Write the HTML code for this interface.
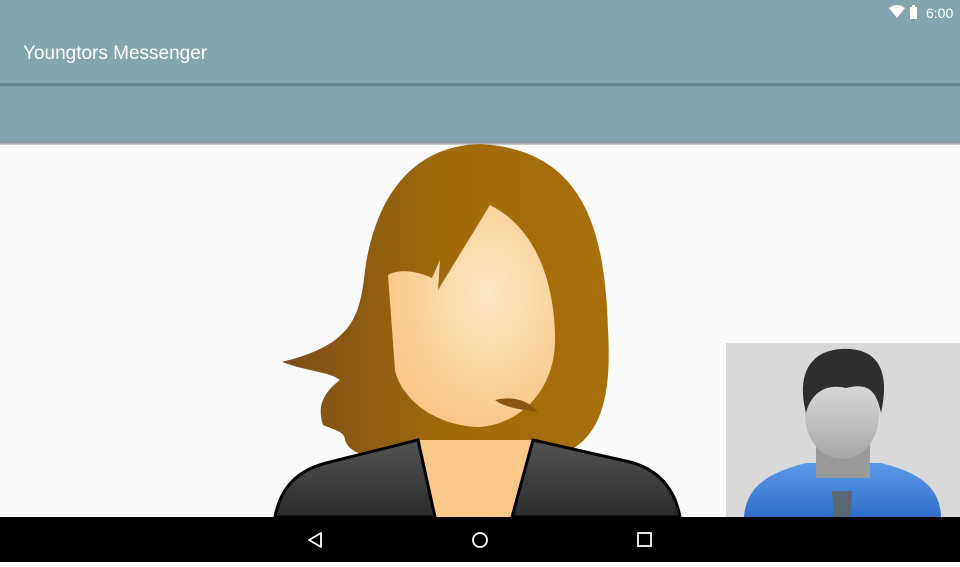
<!DOCTYPE html>
<html><head><meta charset="utf-8"><style>
html,body{margin:0;padding:0;width:960px;height:562px;overflow:hidden;background:#fafafa;font-family:"Liberation Sans",sans-serif}
.bar{position:absolute;left:0;top:0;width:960px;height:144px;background:#83a5ae}
.line{position:absolute;left:0;top:83px;width:960px;height:4px;background:linear-gradient(#6f8f98,#5f7f88,#7d9ea7)}
.bot{position:absolute;left:0;top:141px;width:960px;height:4px;background:linear-gradient(#7e9aa4,#8e9ea6,#d8d8d8)}
.title{position:absolute;left:23px;top:43px;color:#fff;font-size:19px}
.time{position:absolute;left:926px;top:5px;color:#fff;font-size:14px}
.nav{position:absolute;left:0;top:517px;width:960px;height:45px;background:#000}
.thumb{position:absolute;left:726px;top:343px;width:234px;height:174px;background:#d9d9d9;overflow:hidden}
</style></head><body>
<div class="bar"></div><div class="line"></div><div class="bot"></div>
<div class="title">Youngtors Messenger</div>
<svg style="position:absolute;left:888px;top:4px" width="36" height="16">
<path d="M1 4 Q9 -2 17 4 L9 14 Z" fill="#fff"/><rect x="22" y="3" width="7" height="12" fill="#fff"/><rect x="24" y="1" width="3" height="2" fill="#fff"/></svg>
<div class="time">6:00</div>
<svg style="position:absolute;left:0;top:0" width="960" height="517">
<defs>
<radialGradient id="sk" cx="0.6" cy="0.4" r="0.6"><stop offset="0" stop-color="#fde6c4"/><stop offset="1" stop-color="#f9c98a"/></radialGradient>
<linearGradient id="hr" x1="0" x2="1"><stop offset="0" stop-color="#7a4e16"/><stop offset="0.5" stop-color="#a06a0c"/><stop offset="1" stop-color="#a8700a"/></linearGradient>
<linearGradient id="jk" x1="0" y1="0" x2="0" y2="1"><stop offset="0" stop-color="#555"/><stop offset="1" stop-color="#2a2a2a"/></linearGradient>
</defs>
<path d="M480 144 C410 146 375 200 365 270 C360 320 350 345 282 362 C310 372 330 372 340 380 C320 395 318 410 323 425 C335 430 345 432 345 440 C350 455 370 460 420 455 L560 455 C600 440 612 400 608 330 C605 240 590 150 480 144 Z" fill="url(#hr)"/>
<path d="M420 440 L420 517 L540 517 L535 440 Z" fill="#f9c98a"/>
<path d="M490 205 C540 230 555 290 555 340 C555 390 520 425 478 427 C430 425 400 395 395 370 L388 275 C400 268 420 272 432 278 L440 260 L438 290 Z" fill="url(#sk)"/>
<path d="M495 400 C515 395 530 402 538 412 C525 410 505 408 495 400 Z" fill="#8a5510"/>
<path d="M275 517 C280 490 295 470 330 462 L418 440 L435 517 Z" fill="url(#jk)" stroke="#000" stroke-width="3"/>
<path d="M680 517 C675 490 660 470 630 462 L533 440 L512 517 Z" fill="url(#jk)" stroke="#000" stroke-width="3"/>
</svg>
<div class="thumb"><svg width="234" height="174">
<defs><linearGradient id="fc" x1="0" y1="0" x2="0" y2="1"><stop offset="0" stop-color="#e2e2e2"/><stop offset="1" stop-color="#a6a6a6"/></linearGradient>
<linearGradient id="sh" x1="0" y1="0" x2="0" y2="1"><stop offset="0" stop-color="#5b9ae8"/><stop offset="1" stop-color="#2f6fc8"/></linearGradient></defs>
<path d="M18 174 C20 145 40 130 80 120 L155 120 C195 130 214 145 215 174 Z" fill="url(#sh)"/>
<rect x="90" y="95" width="54" height="40" fill="#9a9a9a"/>
<ellipse cx="116" cy="72" rx="37" ry="44" fill="url(#fc)"/>
<path d="M80 70 C70 30 85 8 115 6 C150 4 165 25 155 70 C150 45 140 40 120 45 C100 40 85 50 80 70 Z" fill="#2e2e2e"/>
<path d="M106 148 L126 148 L124 174 L108 174 Z" fill="#5a6670"/>
</svg></div>
<div class="nav"><svg width="960" height="45">
<path d="M309 23 L321 16 L321 30 Z" fill="none" stroke="#fff" stroke-width="1.8" stroke-linejoin="round"/>
<circle cx="480" cy="23" r="7" fill="none" stroke="#fff" stroke-width="1.8"/>
<rect x="638" y="16" width="13" height="13" fill="none" stroke="#fff" stroke-width="1.8"/>
</svg></div>
</body></html>
